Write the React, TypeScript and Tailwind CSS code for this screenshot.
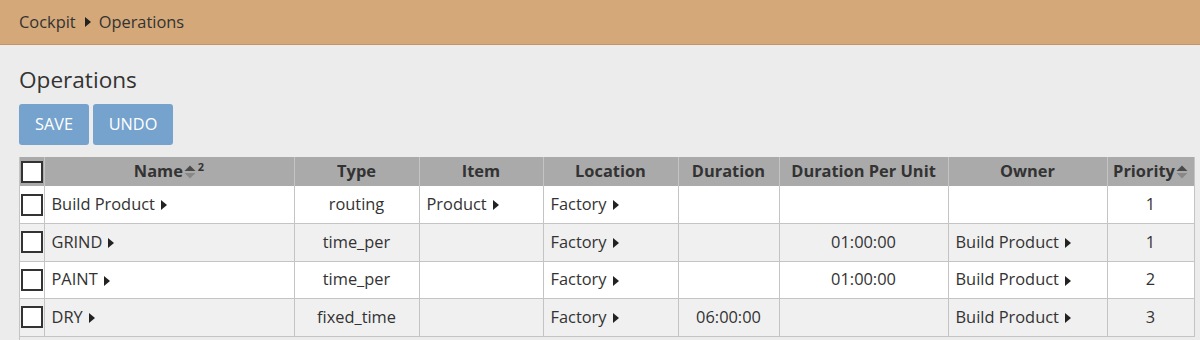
import React from 'react'

type Row = {
    name: string,
    type: string,
    item?: string,
    location: string,
    duration?: string,
    perUnit?: string,
    owner?: string,
    priority: number
}

const rows: Row[] = [
    {name: 'Build Product', type: 'routing', item: 'Product', location: 'Factory', priority: 1},
    {name: 'GRIND', type: 'time_per', location: 'Factory', perUnit: '01:00:00', owner: 'Build Product', priority: 1},
    {name: 'PAINT', type: 'time_per', location: 'Factory', perUnit: '01:00:00', owner: 'Build Product', priority: 2},
    {name: 'DRY', type: 'fixed_time', location: 'Factory', duration: '06:00:00', owner: 'Build Product', priority: 3},
]

const Caret = ({className = 'ml-[6px] mb-[1px]'}: { className?: string }) => (
    <svg width="6" height="10" viewBox="0 0 6 10" className={`inline-block ${className}`}>
        <path d="M0 0 L6 5 L0 10 Z" fill="#222"/>
    </svg>
)

const SortIcon = () => (
    <svg width="12" height="14" viewBox="0 0 12 14" className="inline-block ml-[1px] mb-[1px]">
        <path d="M0.5 6 L6 0.5 L11.5 6 Z" fill="#4a4a4a"/>
        <path d="M0.5 8 L6 13.5 L11.5 8 Z" fill="#888"/>
    </svg>
)

const Link = ({text}: { text?: string }) => text ? <span>{text}<Caret/></span> : null

const Check = () => (
    <div className="w-[22px] h-[22px] bg-white border-2 border-[#333] mx-auto"/>
)

const th = "border-r border-[#c4c4c4] font-bold text-[#333] text-center h-[29px] p-0"
const td = "border-r border-b border-[#c4c4c4] h-[37.5px] p-0"

export default function App() {
    return (
        <div className="w-[1200px] h-[340px] overflow-hidden bg-[#ececec] text-[#333]"
             style={{fontFamily: '"Open Sans", "Liberation Sans", sans-serif'}}>
            <div className="h-[45px] bg-[#d4a878] border-b border-[#c69462] flex items-center px-[19px] text-[16.4px]">
                <span>Cockpit</span>
                <Caret className="ml-[9px]"/>
                <span className="ml-[8px]">Operations</span>
            </div>
            <div className="pl-[19px]">
                <h1 className="text-[22.6px] leading-[24px] mt-[23px]">Operations</h1>
                <div className="flex gap-[4px] mt-[12px]">
                    <button
                        className="w-[70px] h-[41px] rounded-[3px] bg-[#75a3cd] text-white text-[16.3px]">SAVE
                    </button>
                    <button
                        className="w-[80px] h-[41px] rounded-[3px] bg-[#75a3cd] text-white text-[16.3px]">UNDO
                    </button>
                </div>
                <div className="mt-[12px] border-l border-[#c4c4c4] h-[200px]">
                    <table className="border-collapse table-fixed w-[1174px] text-[16.4px]">
                        <colgroup>
                            <col className="w-[24px]"/>
                            <col className="w-[250px]"/>
                            <col className="w-[125px]"/>
                            <col className="w-[124px]"/>
                            <col className="w-[135px]"/>
                            <col className="w-[101px]"/>
                            <col className="w-[169px]"/>
                            <col className="w-[159px]"/>
                            <col className="w-[87px]"/>
                        </colgroup>
                        <thead>
                        <tr className="bg-[#aaaaaa]">
                            <th className={th}><Check/></th>
                            <th className={th}>
                                Name<SortIcon/><sup className="text-[11px] ml-[2px] -top-[6px]">2</sup>
                            </th>
                            <th className={th}>Type</th>
                            <th className={th}>Item</th>
                            <th className={th}>Location</th>
                            <th className={th}>Duration</th>
                            <th className={th}>Duration Per Unit</th>
                            <th className={th}>Owner</th>
                            <th className={th}>Priority<SortIcon/></th>
                        </tr>
                        </thead>
                        <tbody>
                        {rows.map((r, i) => (
                            <tr key={r.name} className={i % 2 === 0 ? 'bg-white' : 'bg-[#f0f0f0]'}>
                                <td className={td}><Check/></td>
                                <td className={`${td} px-[7px]`}><Link text={r.name}/></td>
                                <td className={`${td} text-center`}>{r.type}</td>
                                <td className={`${td} px-[7px]`}><Link text={r.item}/></td>
                                <td className={`${td} px-[7px]`}><Link text={r.location}/></td>
                                <td className={`${td} text-center`}>{r.duration}</td>
                                <td className={`${td} text-center`}>{r.perUnit}</td>
                                <td className={`${td} px-[7px]`}><Link text={r.owner}/></td>
                                <td className={`${td} text-center`}>{r.priority}</td>
                            </tr>
                        ))}
                        </tbody>
                    </table>
                </div>
            </div>
        </div>
    )
}
